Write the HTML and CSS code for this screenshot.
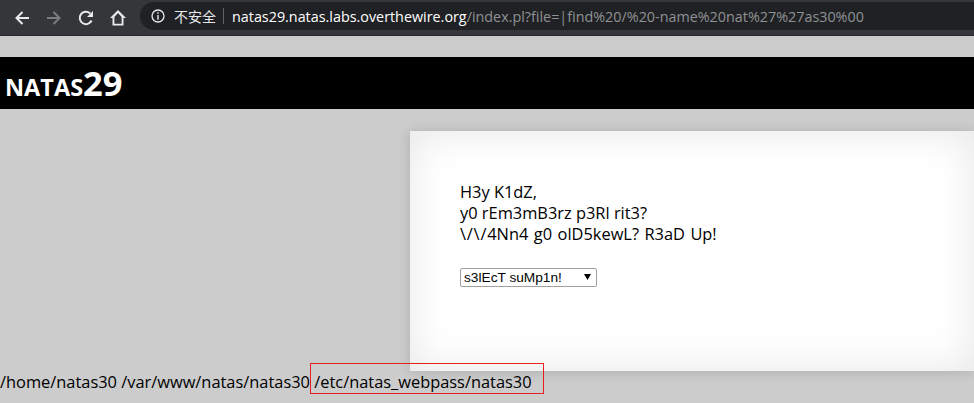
FILE: index.html
```html
<!DOCTYPE html>
<html lang="zh">
<head>
<meta charset="utf-8">
<title>natas29</title>
<link rel="stylesheet" href="styles.css">
</head>
<body>
<div class="toolbar">
  <div class="nav">
    <svg class="ico" viewBox="0 0 16 16"><path d="M15 8H2.5M8.5 2L2.5 8l6 6" fill="none" stroke="#e8eaed" stroke-width="2"/></svg>
    <svg class="ico" viewBox="0 0 16 16"><path d="M1 8h12.5M7.5 2l6 6-6 6" fill="none" stroke="#7b7d80" stroke-width="2"/></svg>
    <svg class="ico" viewBox="0 0 16 16"><path d="M13.6 10.5A6.2 6.2 0 1 1 12.2 3.4" fill="none" stroke="#e8eaed" stroke-width="2"/><path d="M15 1v6H9z" fill="#e8eaed"/></svg>
    <svg class="ico" viewBox="0 0 16 16"><path d="M8 0L0 8h2.5v7.5h11V8H16zM4.4 13.7V7L8 3l3.6 4v6.7z" fill="#e8eaed" fill-rule="evenodd"/></svg>
  </div>
  <div class="omnibox">
    <svg class="info" viewBox="0 0 14 14"><circle cx="7" cy="7" r="6" fill="none" stroke="#e8eaed" stroke-width="1.3"/><path d="M6.3 3.3h1.4v1.4H6.3zM6.3 6h1.4v4.7H6.3z" fill="#e8eaed"/></svg>
    <span class="insecure">不安全</span>
    <span class="sep"></span>
    <span class="url"><span class="host">natas29.natas.labs.overthewire.org</span>/index.pl?file=|find%20/%20-name%20nat%27%27as30%00</span>
  </div>
</div>
<h1 class="banner"><span class="small">NATAS</span>29</h1>
<div class="content">
  <p class="line">H3y K1dZ,</p>
  <p class="line">y0 rEm3mB3rz p3Rl rit3?</p>
  <p class="line wide"><span class="slashes">\/\/</span>4Nn4 g0 olD5kewL? R3aD Up!</p>
  <select class="pick"><option>s3lEcT suMp1n!</option></select>
</div>
<p class="output">/home/natas30 /var/www/natas/natas30 <span class="marked">/etc/natas_webpass/natas30<span class="redbox"></span></span></p>
</body>
</html>
```
FILE: styles.css
```css
html, body { margin: 0; padding: 0; }
body {
  width: 974px;
  height: 403px;
  overflow: hidden;
  background: #ccc;
  font-family: "Open Sans", "Noto Sans", sans-serif;
  color: #000;
}
.toolbar {
  display: flex;
  align-items: center;
  height: 35px;
  background: #35363a;
  border-bottom: 1px solid #26272a;
}
.nav {
  display: flex;
  align-items: center;
  gap: 16px;
  padding-left: 14px;
  width: 126px;
  box-sizing: border-box;
}
.ico { width: 16px; height: 16px; flex: none; }
.omnibox {
  flex: 1;
  display: flex;
  align-items: center;
  height: 28px;
  margin-left: 14px;
  margin-top: -3px;
  padding-left: 11px;
  background: #202124;
  border-radius: 14px 0 0 14px;
  font-size: 14.35px;
}
.info { width: 14px; height: 14px; flex: none; }
.insecure {
  margin-left: 9px;
  font-family: "Noto Sans CJK SC", sans-serif;
  font-size: 14px;
  color: #e8eaed;
}
.sep { width: 1px; height: 16px; margin: 0 8px 0 7px; background: #5f6368; }
.url { color: #8f9194; white-space: nowrap; }
.host { color: #fff; }
.banner {
  margin: 21px 0 0;
  height: 52px;
  padding-left: 5px;
  box-sizing: border-box;
  background: #000;
  color: #fff;
  font-size: 34.5px;
  line-height: 52px;
  font-weight: 700;
}
.small { font-size: 23.5px; }
.content {
  margin: 22px 0 0 410px;
  height: 240px;
  box-sizing: border-box;
  padding: 50px 50px 0;
  background: #fff;
  box-shadow: 0 1px 12px #00000026, inset 0 0 40px #0000001a;
}
.line { margin: 0; font-size: 16.4px; line-height: 21px; white-space: nowrap; }
.wide { word-spacing: 1.2px; }
.slashes { letter-spacing: 0.8px; }
.pick {
  display: block;
  margin-top: 24px;
  width: 137px;
  height: 19px;
  padding: 0 0 0 3px;
  appearance: none;
  font-family: "Liberation Sans", sans-serif;
  font-size: 13.7px;
  color: #000;
  background: #fff url("data:image/svg+xml,%3Csvg xmlns='http://www.w3.org/2000/svg' width='7' height='6'%3E%3Cpath d='M0 0h7L3.5 6z'/%3E%3C/svg%3E") no-repeat 123px 5px;
  border: 1px solid #a0a0a0;
  border-radius: 2px;
}
.output {
  margin: 0;
  font-size: 16.4px;
  line-height: 22px;
  white-space: nowrap;
}
.marked { position: relative; }
.redbox {
  position: absolute;
  left: -4px;
  top: -7px;
  width: 232px;
  height: 29px;
  border: 1px solid #e81c23;
}
```
